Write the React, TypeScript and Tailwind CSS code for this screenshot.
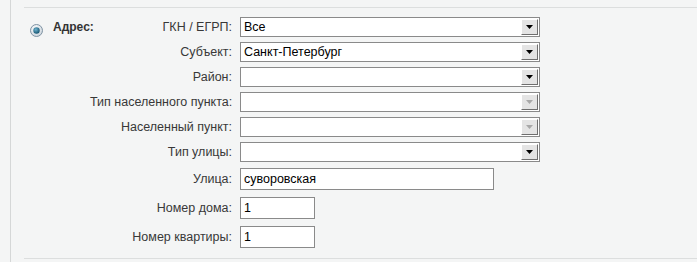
import React from "react";

const font = { fontFamily: '"Liberation Sans", Arial, sans-serif' };

function Arrow({ disabled }: { disabled?: boolean }) {
  return (
    <div className="absolute right-[1px] top-[1px] bottom-[1px] w-[17px] bg-[#e4e4e4] border-t border-l border-t-white border-l-white border-r border-b border-r-[#6f6f6f] border-b-[#6f6f6f] flex items-center justify-center">
      <svg width="7" height="4" viewBox="0 0 7 4">
        <polygon points="0,0 7,0 3.5,4" fill={disabled ? "#a8a8a8" : "#000"} />
      </svg>
    </div>
  );
}

function Select({ value, disabled }: { value?: string; disabled?: boolean }) {
  return (
    <div className="relative w-[300px] h-[20px] bg-white border border-[#8a8a8a] flex items-center pl-[3px] text-[12.5px] text-black">
      {value}
      <Arrow disabled={disabled} />
    </div>
  );
}

function Input({ value, w }: { value: string; w: string }) {
  return (
    <div className={`${w} h-[22px] bg-white border border-[#8a8a8a] flex items-center pl-[3px] text-[12.5px] text-black`}>
      {value}
    </div>
  );
}

function Radio() {
  return (
    <svg width="13" height="13" viewBox="0 0 13 13">
      <defs>
        <radialGradient id="rg" cx="40%" cy="35%" r="70%">
          <stop offset="0%" stopColor="#ffffff" />
          <stop offset="100%" stopColor="#c9d2da" />
        </radialGradient>
        <radialGradient id="dot" cx="40%" cy="35%" r="70%">
          <stop offset="0%" stopColor="#6fb3cf" />
          <stop offset="100%" stopColor="#0f4f6b" />
        </radialGradient>
      </defs>
      <circle cx="6.5" cy="6.5" r="6" fill="url(#rg)" stroke="#7f93a3" strokeWidth="1" />
      <circle cx="6.5" cy="6.5" r="3.2" fill="url(#dot)" />
    </svg>
  );
}

const selectRows: { label: string; value?: string; disabled?: boolean }[] = [
  { label: "ГКН / ЕГРП:", value: "Все" },
  { label: "Субъект:", value: "Санкт-Петербург" },
  { label: "Район:" },
  { label: "Тип населенного пункта:", disabled: true },
  { label: "Населенный пункт:", disabled: true },
  { label: "Тип улицы:" },
];

const labelCls = "w-[142px] text-right text-[12.5px] text-[#383838] whitespace-nowrap";

export default function App() {
  return (
    <div className="w-[697px] h-[262px] bg-[#f4f5f5] overflow-hidden" style={font}>
      <div className="ml-[10px] h-full border-l border-[#d5d7d7] pl-[13px] pt-[7px]">
        <div className="border-t border-b border-[#dcdede] pt-[9px] pb-[10px] flex">
          <div className="w-[66px] flex items-start">
            <div className="flex items-center h-[20px]">
              <div className="ml-[6px] mt-[6px] w-[13px] h-[13px]">
                <Radio />
              </div>
              <span className="ml-[10px] text-[12px] font-bold text-[#333]">Адрес:</span>
            </div>
          </div>
          <div className="flex flex-col">
            <div className="flex flex-col gap-[5px]">
              {selectRows.map((r) => (
                <div key={r.label} className="flex items-center">
                  <div className={labelCls}>{r.label}</div>
                  <div className="ml-[8px]">
                    <Select value={r.value} disabled={r.disabled} />
                  </div>
                </div>
              ))}
            </div>
            <div className="flex items-center mt-[6px]">
              <div className={labelCls}>Улица:</div>
              <div className="ml-[8px]">
                <Input value="суворовская" w="w-[254px]" />
              </div>
            </div>
            <div className="flex items-center mt-[7px]">
              <div className={labelCls}>Номер дома:</div>
              <div className="ml-[8px]">
                <Input value="1" w="w-[75px]" />
              </div>
            </div>
            <div className="flex items-center mt-[7px]">
              <div className={labelCls}>Номер квартиры:</div>
              <div className="ml-[8px]">
                <Input value="1" w="w-[75px]" />
              </div>
            </div>
          </div>
        </div>
      </div>
    </div>
  );
}
